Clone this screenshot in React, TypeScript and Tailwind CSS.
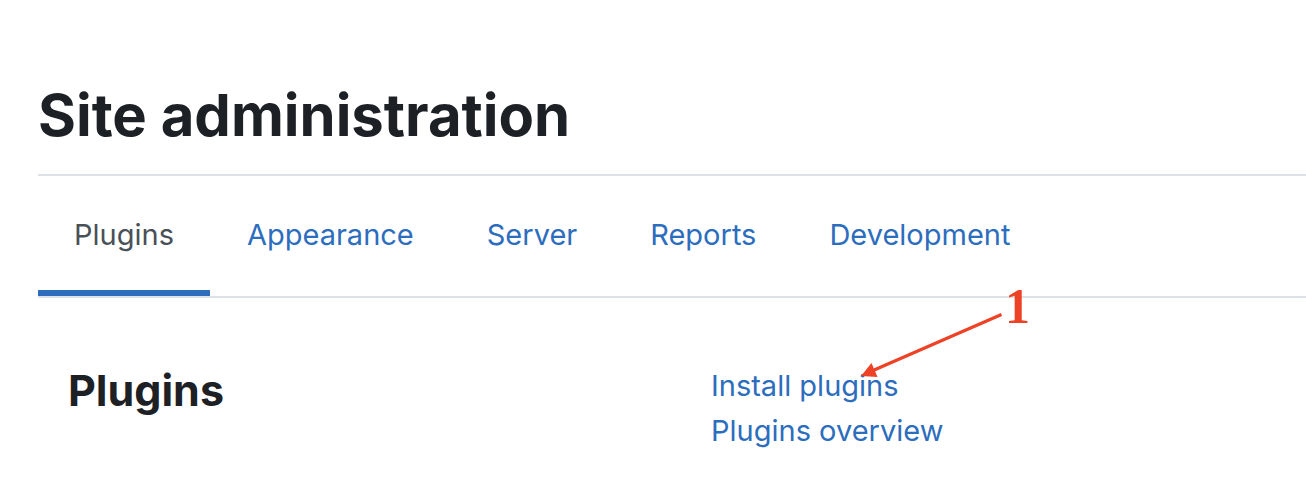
const tabs = [
  { label: "Plugins", href: "#plugins" },
  { label: "Appearance", href: "#appearance" },
  { label: "Server", href: "#server" },
  { label: "Reports", href: "#reports" },
  { label: "Development", href: "#development" },
];

export default function App() {
  return (
    <main className="min-h-screen overflow-hidden bg-white pt-20 pl-[38px] font-['Inter',sans-serif] text-[29px] text-[#2c6dbd]">
      <h1 className="text-[58px] leading-[70px] font-bold text-[#1d2125]">Site administration</h1>
      <nav aria-label="Site administration" className="mt-6 flex gap-px border-y-2 border-[#dee2e6]">
        {tabs.map((tab, i) => (
          <a
            key={tab.label}
            href={tab.href}
            aria-current={i === 0 ? "page" : undefined}
            className={
              i === 0
                ? "border-b-6 border-[#2c6dbd] px-9 pt-9 pb-8 leading-[46px] text-[#495057]"
                : "border-b-6 border-transparent px-9 pt-9 pb-8 leading-[46px]"
            }
          >
            {tab.label}
          </a>
        ))}
      </nav>
      <section className="relative grid grid-cols-2 pt-[65px] pl-[30px]">
        <h2 className="text-[43px] leading-[54px] font-bold text-[#1d2125]">Plugins</h2>
        <ul className="pl-6 leading-[45px]">
          <li><a href="#install">Install plugins</a></li>
          <li><a href="#overview">Plugins overview</a></li>
        </ul>
        <div className="absolute -top-5 left-[820px] text-[#ee4226]">
          <svg aria-hidden="true" width="148" height="104" viewBox="858 278 148 104" fill="none">
            <path d="M1001.500 314.500L873 370.500" stroke="currentColor" strokeWidth="3.200" />
            <path d="M861 376L871.500 363L877.500 377Z" fill="currentColor" />
          </svg>
          <span className="absolute top-0 left-[147px] font-['Liberation_Serif',serif] text-[50px] leading-[56px] font-bold">1</span>
        </div>
      </section>
    </main>
  );
}
